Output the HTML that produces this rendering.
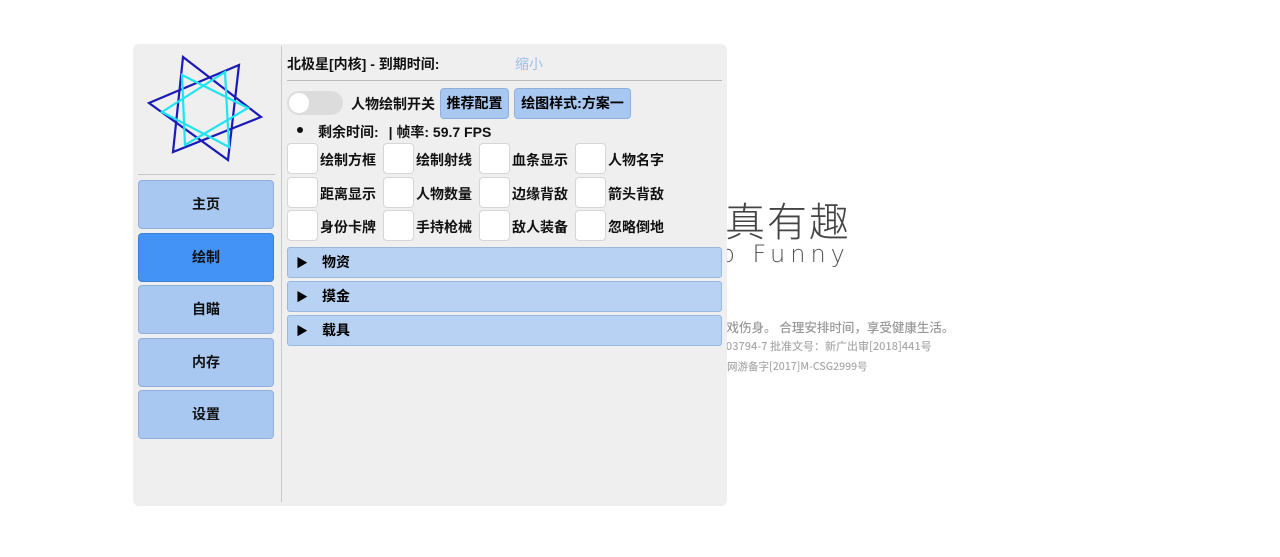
<!DOCTYPE html>
<html><head><meta charset="utf-8"><style>
body{margin:0;width:1280px;height:557px;background:#fff;position:relative;overflow:hidden;font-family:"Liberation Sans","Noto Sans CJK SC",sans-serif;}
.abs{position:absolute}
.bg{color:#444;font-family:"Noto Sans CJK SC",sans-serif;font-weight:300;white-space:nowrap}
.panel{left:133px;top:44px;width:594px;height:462px;background:#efefef;border-radius:6px;z-index:2}
.nav{left:5px;width:136px;height:49px;background:#a8c8f2;border:1px solid #8fb0dc;border-radius:4px;box-sizing:border-box;text-align:center;line-height:47px;font-size:14px;font-weight:bold;color:#111}
.t{font-size:14px;font-weight:bold;color:#111;white-space:nowrap}
.cb{width:31px;height:31px;background:#fff;border:1px solid #d6d6d6;border-radius:4px;box-sizing:border-box}
.btn{background:#a8c8f2;border:1px solid #8fb0dc;border-radius:4px;box-sizing:border-box;height:31px;line-height:29px;text-align:center;font-size:14px;font-weight:bold}
.bar{left:154px;width:435px;height:31px;background:#b7d2f2;border:1px solid #98b8e0;border-radius:3px;box-sizing:border-box;line-height:29px;font-size:14px;font-weight:bold}
</style></head><body>
<div class="abs bg" style="left:641px;top:190px;font-size:40px;letter-spacing:2px">好玩真有趣</div>
<div class="abs bg" style="left:700px;top:240px;font-size:24px;letter-spacing:5px;font-family:'DejaVu Sans',sans-serif;font-weight:200;color:#555">So Funny</div>
<div class="abs bg" style="left:689px;top:317px;font-size:12.5px;color:#999;font-weight:500">沉迷游戏伤身。 合理安排时间，享受健康生活。</div>
<div class="abs bg" style="left:722px;top:338px;font-size:11px;color:#aaa;font-weight:500">-03794-7 批准文号：新广出审[2018]441号</div>
<div class="abs bg" style="left:727px;top:359px;font-size:10.5px;color:#aaa;font-weight:500">网游备字[2017]M-CSG2999号</div>

<div class="abs panel">
<svg class="abs" style="left:0;top:0" width="150" height="130">
<g fill="none" stroke-width="2.2">
<polygon points="50,13 128,73 40,108" stroke="#1a1ab8"/>
<polygon points="106,21 16,59 95,116" stroke="#1a1ab8"/>
<polygon points="49,31 115,64 52,101" stroke="#1ee4f0"/>
<polygon points="92,28 29,68 96,103" stroke="#1ee4f0"/>
</g></svg>
<div class="abs" style="left:5px;top:130px;width:137px;height:1px;background:#c4c4c4"></div>
<div class="abs" style="left:148px;top:2px;width:1px;height:456px;background:#c8c8c8"></div>
<div class="abs nav" style="top:136px">主页</div>
<div class="abs nav" style="top:189px;background:#4393f7;border-color:#3a80d8">绘制</div>
<div class="abs nav" style="top:241px">自瞄</div>
<div class="abs nav" style="top:294px">内存</div>
<div class="abs nav" style="top:346px">设置</div>

<div class="abs t" style="left:154px;top:10px">北极星[内核] - 到期时间:</div>
<div class="abs" style="left:382px;top:10px;font-size:14px;color:#9cc0ee">缩小</div>
<div class="abs" style="left:154px;top:36px;width:435px;height:1px;background:#bbb"></div>
<div class="abs" style="left:154px;top:47px;width:56px;height:24px;border-radius:12px;background:#dcdcdc"></div>
<div class="abs" style="left:156px;top:49px;width:20px;height:20px;border-radius:10px;background:#fff"></div>
<div class="abs t" style="left:218px;top:50px">人物绘制开关</div>
<div class="abs btn" style="left:307px;top:44px;width:69px">推荐配置</div>
<div class="abs btn" style="left:381px;top:44px;width:117px">绘图样式:方案一</div>
<div class="abs" style="left:164px;top:83px;width:6px;height:6px;border-radius:3px;background:#111"></div>
<div class="abs t" style="left:185px;top:78px">剩余时间: <span style="margin-left:6px">| 帧率: 59.7 FPS</span></div>

<div class="abs cb" style="left:154px;top:99px"></div><div class="abs t" style="left:187px;top:106px">绘制方框</div>
<div class="abs cb" style="left:250px;top:99px"></div><div class="abs t" style="left:283px;top:106px">绘制射线</div>
<div class="abs cb" style="left:346px;top:99px"></div><div class="abs t" style="left:379px;top:106px">血条显示</div>
<div class="abs cb" style="left:442px;top:99px"></div><div class="abs t" style="left:475px;top:106px">人物名字</div>
<div class="abs cb" style="left:154px;top:133px"></div><div class="abs t" style="left:187px;top:140px">距离显示</div>
<div class="abs cb" style="left:250px;top:133px"></div><div class="abs t" style="left:283px;top:140px">人物数量</div>
<div class="abs cb" style="left:346px;top:133px"></div><div class="abs t" style="left:379px;top:140px">边缘背敌</div>
<div class="abs cb" style="left:442px;top:133px"></div><div class="abs t" style="left:475px;top:140px">箭头背敌</div>
<div class="abs cb" style="left:154px;top:166px"></div><div class="abs t" style="left:187px;top:173px">身份卡牌</div>
<div class="abs cb" style="left:250px;top:166px"></div><div class="abs t" style="left:283px;top:173px">手持枪械</div>
<div class="abs cb" style="left:346px;top:166px"></div><div class="abs t" style="left:379px;top:173px">敌人装备</div>
<div class="abs cb" style="left:442px;top:166px"></div><div class="abs t" style="left:475px;top:173px">忽略倒地</div>

<div class="abs bar" style="top:203px"><span style="margin-left:8px;font-size:12px">▶</span><span style="margin-left:14px">物资</span></div>
<div class="abs bar" style="top:237px"><span style="margin-left:8px;font-size:12px">▶</span><span style="margin-left:14px">摸金</span></div>
<div class="abs bar" style="top:271px"><span style="margin-left:8px;font-size:12px">▶</span><span style="margin-left:14px">载具</span></div>
</div>
</body></html>
